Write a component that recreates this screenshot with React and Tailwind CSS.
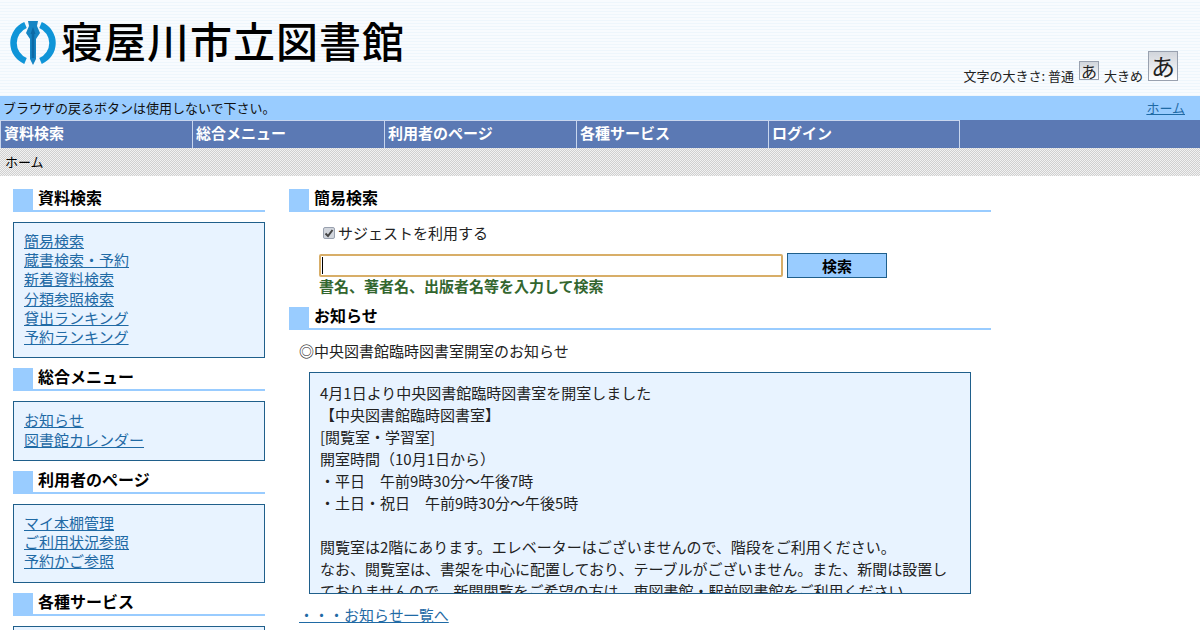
const font = "font-['Noto_Sans_CJK_JP','Noto_Sans',sans-serif]";

const navItems = ['資料検索', '総合メニュー', '利用者のページ', '各種サービス', 'ログイン'];

const sideMenus = [
  { title: '資料検索', links: ['簡易検索', '蔵書検索・予約', '新着資料検索', '分類参照検索', '貸出ランキング', '予約ランキング'] },
  { title: '総合メニュー', links: ['お知らせ', '図書館カレンダー'] },
  { title: '利用者のページ', links: ['マイ本棚管理', 'ご利用状況参照', '予約かご参照'] },
  { title: '各種サービス', links: [] },
];

const notice = [
  '4月1日より中央図書館臨時図書室を開室しました',
  '【中央図書館臨時図書室】',
  '[閲覧室・学習室]',
  '開室時間（10月1日から）',
  '・平日　午前9時30分～午後7時',
  '・土日・祝日　午前9時30分～午後5時',
  '\u00a0',
  '閲覧室は2階にあります。エレベーターはございませんので、階段をご利用ください。',
  'なお、閲覧室は、書架を中心に配置しており、テーブルがございません。また、新聞は設置し',
  'ておりませんので、新聞閲覧をご希望の方は、東図書館・駅前図書館をご利用ください。',
];

function Logo() {
  return (
    <svg width="46" height="46" viewBox="0 0 46 46" className="shrink-0">
      <path d="M15.5 5A19.5 19.5 0 0 0 15.5 41" fill="none" stroke="#0f95d8" strokeWidth="6.5" />
      <path d="M30.5 5A19.5 19.5 0 0 1 30.5 41" fill="none" stroke="#0f95d8" strokeWidth="6.5" />
      <path d="M18 1H28L27 6L30 13L26 19V39L23 45L20 39V19L16 13L19 6Z" fill="#1585c4" />
      <path d="M23 7L25.5 14H24.3V38H21.7V14H20.5Z" fill="#0c6aa6" />
    </svg>
  );
}

function SectionTitle({ children }) {
  return (
    <div className="flex h-[23px] items-stretch">
      <div className="w-5 shrink-0 bg-[#99ccff]" />
      <div className="flex-1 border-b-2 border-[#99ccff] pl-[5px] text-base leading-[17px] font-bold text-black">
        {children}
      </div>
    </div>
  );
}

export default function App() {
  return (
    <div className={`${font} h-[630px] w-[1200px] overflow-hidden bg-white text-black`}>
      <header className="flex h-[96px] items-start justify-between bg-[#f3f8fc] bg-[repeating-linear-gradient(0deg,#eef6fc_0px,#eef6fc_1px,#f8fbfe_1px,#f8fbfe_3px)]">
        <div className="mt-[20px] ml-[10px] flex items-center gap-[5px]">
          <Logo />
          <span className="mt-[-7px] text-[42px] leading-[46px] tracking-[1px] font-medium whitespace-nowrap">寝屋川市立図書館</span>
        </div>
        <div className="mt-[51px] mr-[22px] flex items-end text-[13px] leading-4 text-[#222]">
          <span>文字の大きさ: 普通</span>
          <span className="mb-[4px] ml-[5px] flex h-[19px] w-5 items-center justify-center border border-gray-400 bg-gradient-to-b from-gray-300 to-white text-base leading-none">あ</span>
          <span className="ml-[5px]">大きめ</span>
          <span className="mb-[3px] ml-[5px] flex h-[30px] w-[30px] items-center justify-center border border-gray-400 bg-gradient-to-b from-gray-300 to-white text-2xl leading-none">あ</span>
        </div>
      </header>

      <div className="flex h-6 items-center justify-between bg-[#99ccff] pr-[15px] pb-px pl-[3px] text-[13px] text-[#111]">
        <span>ブラウザの戻るボタンは使用しないで下さい。</span>
        <a className="text-[#1f6aa5] underline">ホーム</a>
      </div>

      <nav className="flex h-7 bg-[#5b79b4]">
        {navItems.map((item) => (
          <div
            key={item}
            className="h-7 w-48 border-t border-l border-[#c8d6ee] pl-[3px] text-[15px] leading-[23px] font-bold text-white last:border-r"
          >
            {item}
          </div>
        ))}
      </nav>

      <div className="h-7 bg-[#e2e2e2] bg-[conic-gradient(#d0d0d0_25%,#f2f2f2_0_50%,#d0d0d0_0_75%,#f2f2f2_0)] bg-[length:2px_2px] pl-[5px] text-[13px] leading-7">
        ホーム
      </div>

      <div className="flex items-start pt-[13px]">
        <aside className="ml-[13px] w-[252px] shrink-0">
          {sideMenus.map((menu) => (
            <div key={menu.title} className="mb-[10px]">
              <SectionTitle>{menu.title}</SectionTitle>
              <div className="mt-[10px] border border-[#1f5f8b] bg-[#e8f3ff] px-[10px] pt-2 pb-[11.2px]">
                {menu.links.map((link) => (
                  <a key={link} className="block text-[15px] leading-[19.2px] text-[#1f6aa5] underline">
                    {link}
                  </a>
                ))}
              </div>
            </div>
          ))}
        </aside>

        <main className="ml-6 w-[702px] shrink-0">
          <SectionTitle>簡易検索</SectionTitle>
          <label className="mt-[11px] ml-[34px] flex h-5 items-center text-[15px] leading-5 text-[#222]">
            <span className="mr-[3px] flex h-3 w-3 items-center justify-center rounded-[2px] border border-gray-400 bg-gray-300">
              <svg width="10" height="10" viewBox="0 0 10 10">
                <path d="M1.5 5.5L4 8L8.5 2" fill="none" stroke="#444" strokeWidth="2" />
              </svg>
            </span>
            サジェストを利用する
          </label>
          <div className="mt-[10px] ml-[30px] flex items-center gap-1">
            <div className="flex h-[23px] w-[464px] items-center rounded-[2px] border-2 border-[#d8ae68] bg-white pl-[1px]">
              <div className="h-[17px] w-px bg-black" />
            </div>
            <button className="h-[25px] w-[100px] border border-[#1f5f8b] bg-[#99ccff] text-[15px] leading-none font-bold text-black">検索</button>
          </div>
          <p className="mt-[-2px] ml-[30px] text-[15px] leading-[20px] font-bold text-[#33662f]">書名、著者名、出版者名等を入力して検索</p>

          <div className="mt-[11px]">
            <SectionTitle>お知らせ</SectionTitle>
          </div>
          <p className="mt-[11px] ml-[10px] text-[15px] leading-5 text-[#222]">◎中央図書館臨時図書室開室のお知らせ</p>
          <div className="mt-[11px] ml-5 h-[222px] w-[662px] overflow-hidden border border-[#1f5f8b] bg-[#e8f3ff] px-[10px] py-[9px]">
            {notice.map((line, i) => (
              <p key={i} className="text-[15px] leading-[22px] whitespace-nowrap text-[#222]">{line}</p>
            ))}
          </div>
          <a className="mt-[11px] ml-[10px] block text-[15px] leading-5 text-[#1f6aa5] underline">・・・お知らせ一覧へ</a>
        </main>
      </div>
    </div>
  );
}
